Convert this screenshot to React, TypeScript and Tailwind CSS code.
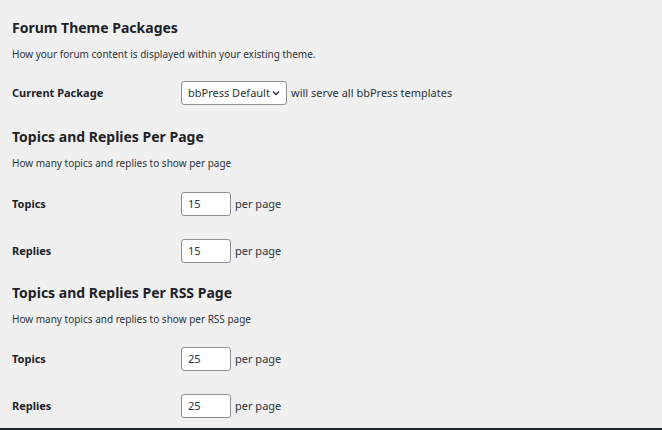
const font = "font-['Liberation_Sans',Arial,sans-serif]";

function Heading({ title, desc }: { title: string; desc: string }) {
  return (
    <div className="flex flex-col">
      <h2 className="text-[14px] font-bold leading-[18px] text-[#1d2327]">{title}</h2>
      <p className="mt-[10px] text-[10px] leading-[14px] text-[#2c3338]">{desc}</p>
    </div>
  );
}

function Row({ label, children }: { label: string; children: React.ReactNode }) {
  return (
    <div className="flex h-[24px] items-center">
      <div className="w-[169px] text-[11px] font-bold text-[#1d2327]">{label}</div>
      <div className="flex items-center gap-[4px] text-[11px] text-[#2c3338]">{children}</div>
    </div>
  );
}

function NumInput({ value }: { value: string }) {
  return (
    <>
      <div className="flex h-[24px] w-[50px] items-center rounded-[3px] border border-[#8c8f94] bg-white px-[6px] text-[11px] text-[#2c3338]">
        {value}
      </div>
      <span>per page</span>
    </>
  );
}

export default function App() {
  return (
    <div className={`${font} h-[430px] w-[662px] overflow-hidden border-b-2 border-[#1d2327] bg-[#f0f0f1] px-[12px] pt-[19px]`}>
      <Heading title="Forum Theme Packages" desc="How your forum content is displayed within your existing theme." />
      <div className="mt-[20px]">
        <Row label="Current Package">
          <div className="flex h-[24px] w-[106px] items-center justify-between rounded-[3px] border border-[#8c8f94] bg-white pl-[6px] pr-[5px] text-[11px]">
            <span>bbPress Default</span>
            <svg width="10" height="10" viewBox="0 0 10 10" fill="none" stroke="#2c3338" strokeWidth="1.4">
              <path d="M2 3.5l3 3 3-3" />
            </svg>
          </div>
          <span>will serve all bbPress templates</span>
        </Row>
      </div>
      <div className="mt-[23px]">
        <Heading title="Topics and Replies Per Page" desc="How many topics and replies to show per page" />
      </div>
      <div className="mt-[22px] flex flex-col gap-[23px]">
        <Row label="Topics"><NumInput value="15" /></Row>
        <Row label="Replies"><NumInput value="15" /></Row>
      </div>
      <div className="mt-[21px]">
        <Heading title="Topics and Replies Per RSS Page" desc="How many topics and replies to show per RSS page" />
      </div>
      <div className="mt-[21px] flex flex-col gap-[23px]">
        <Row label="Topics"><NumInput value="25" /></Row>
        <Row label="Replies"><NumInput value="25" /></Row>
      </div>
    </div>
  );
}
